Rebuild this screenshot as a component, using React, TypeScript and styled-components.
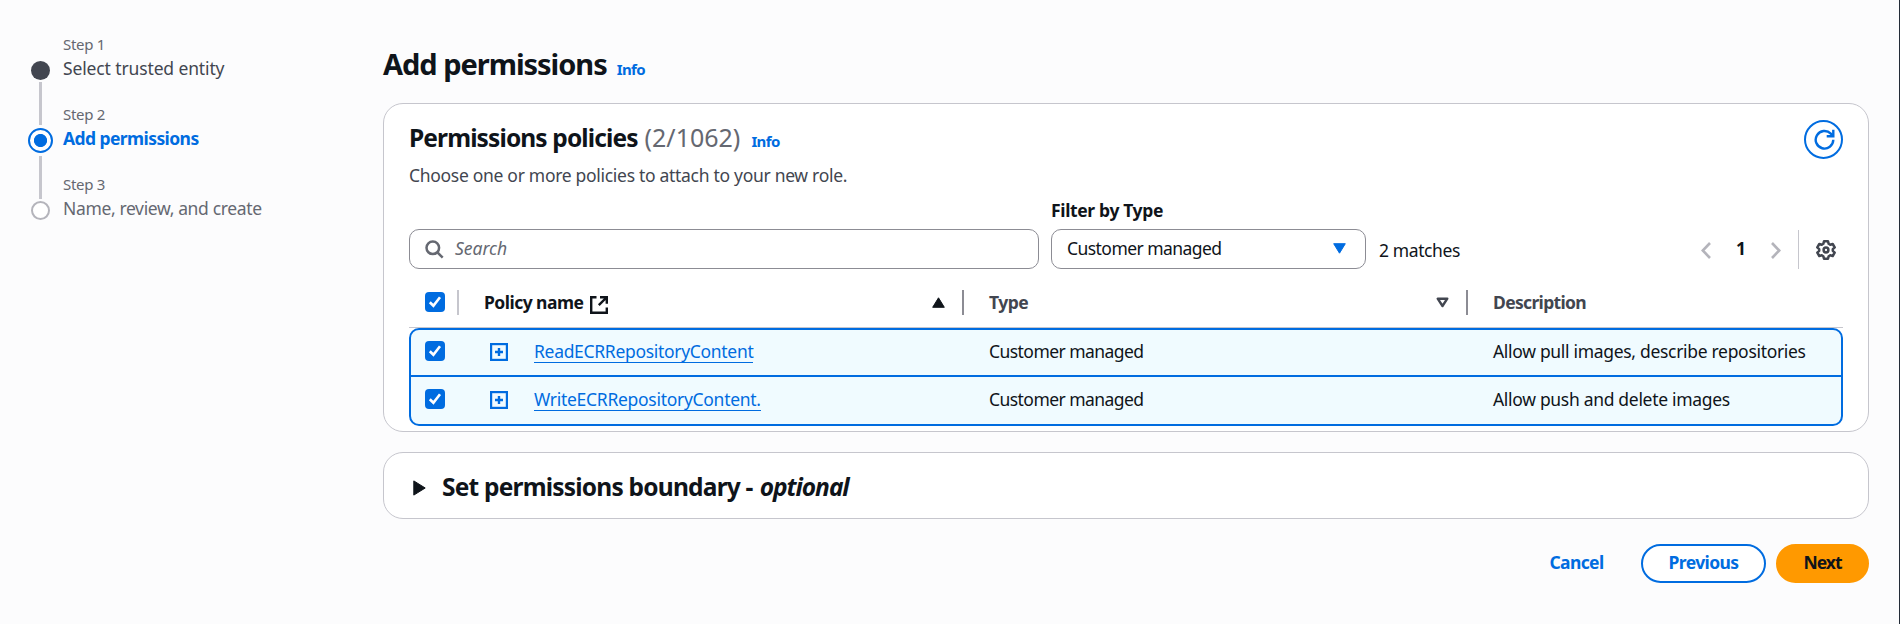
import React from 'react';
import styled, { createGlobalStyle, css } from 'styled-components';

const GlobalStyle = createGlobalStyle`
  *, *::before, *::after { box-sizing: border-box; }
  body {
    margin: 0;
    background: #fcfcfd;
    color: #0f141a;
    font-family: "Noto Sans", "Open Sans", sans-serif;
    font-size: 17.5px;
    line-height: 25px;
  }
  svg { display: block; flex: none; }
`;

const BLUE = '#006ce0';

type StepState = 'done' | 'active' | 'todo';

const Page = styled.div`
  display: flex;
  width: 1900px;
  height: 624px;
  overflow: hidden;
  border-right: 1px solid #232b37;
`;

/* ---- text ---- */
const Text = styled.span<{ $track?: number }>`
  letter-spacing: ${p => p.$track ?? 0}px;
  white-space: nowrap;
`;
const InfoLink = styled.a`
  color: ${BLUE};
  font-size: 15px;
  font-weight: 700;
  letter-spacing: -0.6px;
`;

/* ---- step navigation ---- */
const Steps = styled.ol`
  list-style: none;
  margin: 0;
  padding: 34px 0 0 28px;
  width: 383px;
  flex: none;
`;
const Step = styled.li`
  display: flex;
  gap: 10px;
  height: 70px;
`;
const Rail = styled.div`
  display: flex;
  flex-direction: column;
  align-items: center;
  width: 25px;
  padding-top: 24px;
`;
const Marker = styled.div<{ $state: StepState }>`
  display: flex;
  align-items: center;
  justify-content: center;
  width: 25px;
  height: 25px;
  flex: none;
  &::before {
    content: '';
    border-radius: 50%;
    width: 19px;
    height: 19px;
    ${p => p.$state === 'done' && css`background: #424650;`}
    ${p => p.$state === 'todo' && css`border: 2px solid #b4b4bb; background: #fff;`}
    ${p => p.$state === 'active' && css`
      width: 25px;
      height: 25px;
      border: 2px solid ${BLUE};
      background: radial-gradient(circle, ${BLUE} 6.2px, #fff 6.9px);
    `}
  }
`;
const Connector = styled.div<{ $gap: number }>`
  width: 3px;
  height: 43px;
  flex: none;
  margin-top: ${p => p.$gap}px;
  background: #c6c6cd;
`;
const StepBody = styled.div`
  display: flex;
  flex-direction: column;
  gap: 2px;
`;
const StepLabel = styled.span`
  font-size: 15px;
  line-height: 20px;
  letter-spacing: -0.3px;
  color: #656871;
`;
const StepName = styled.span<{ $state: StepState; $track: number }>`
  letter-spacing: ${p => p.$track}px;
  color: ${p => ({ done: '#424650', active: BLUE, todo: '#656871' })[p.$state]};
  font-weight: ${p => (p.$state === 'active' ? 700 : 400)};
  white-space: nowrap;
`;

/* ---- main column ---- */
const Main = styled.main`
  width: 1486px;
  padding-top: 45px;
  flex: none;
`;
const PageTitle = styled.h1`
  display: flex;
  align-items: baseline;
  gap: 10px;
  margin: 0;
  height: 58px;
  font-size: 29px;
  line-height: 37px;
`;
const Card = styled.section`
  border: 1px solid #c6c6cd;
  border-radius: 20px;
  background: #fff;
`;
const PolicyCard = styled(Card)`
  height: 329px;
  padding: 16px 25px 0;
`;
const CardHeader = styled.header`
  display: flex;
  justify-content: space-between;
  height: 78px;
`;
const CardTitle = styled.h2`
  display: flex;
  align-items: baseline;
  margin: 2px 0 7px;
  font-size: 24.5px;
  line-height: 30px;
`;
const Counter = styled.span`
  margin: 0 11px 0 7px;
  font-size: 25px;
  font-weight: 400;
  color: #656871;
`;
const CardNote = styled.p`
  margin: 0;
  color: #424650;
  letter-spacing: -0.3px;
`;
const RoundButton = styled.button`
  display: flex;
  align-items: center;
  justify-content: center;
  width: 39px;
  height: 39px;
  padding: 0 0 1px 1px;
  border: 2px solid ${BLUE};
  border-radius: 50%;
  background: #fff;
`;

const Toolbar = styled.div`
  display: flex;
  align-items: flex-end;
  height: 71px;
`;
const SearchBox = styled.div`
  display: flex;
  align-items: center;
  gap: 11px;
  width: 630px;
  height: 40px;
  margin-right: 12px;
  padding: 0 15px;
  border: 1px solid #8c8c94;
  border-radius: 10px;
  color: #656871;
  font-style: italic;
`;
const SearchHint = styled.span`
  padding-bottom: 2px;
`;
const Filter = styled.div`
  display: flex;
  flex-direction: column;
  gap: 6px;
  width: 315px;
`;
const FilterLabel = styled.label`
  font-weight: 700;
  letter-spacing: -0.35px;
`;
const Select = styled.div`
  display: flex;
  align-items: center;
  justify-content: space-between;
  height: 40px;
  padding: 0 19px 1px 15px;
  border: 1px solid #8c8c94;
  border-radius: 10px;
`;
const Matches = styled.div`
  margin: 0 auto 6px 13px;
  letter-spacing: -0.39px;
`;
const Pager = styled.div`
  display: flex;
  align-items: center;
  height: 40px;
  margin-bottom: -1px;
  padding-right: 7px;
`;
const PageNumber = styled.b`
  width: 60px;
  text-align: center;
  padding-bottom: 3px;
`;
const PagerDivider = styled.div`
  align-self: flex-start;
  width: 1px;
  height: 39px;
  margin: 0 17px;
  background: #c6c6cd;
`;

/* ---- table ---- */
const HeadRow = styled.div`
  display: grid;
  grid-template-columns: 50px 505px 504px 1fr;
  height: 59px;
  padding-top: 8px;
  align-items: center;
  font-weight: 700;
  border-bottom: 1px solid #c6c6cd;
`;
const HeadCell = styled.div<{ $pad: number; $muted?: boolean; $divider?: string }>`
  display: flex;
  align-items: center;
  height: 25px;
  padding: 0 17px 0 ${p => p.$pad}px;
  color: ${p => (p.$muted ? '#424650' : '#0f141a')};
  border-right: ${p => (p.$divider ? `2px solid ${p.$divider}` : 'none')};
`;
const CheckHead = styled(HeadCell)`
  padding-right: 0;
`;
const HeadLabel = styled.span`
  display: flex;
  align-items: flex-start;
  gap: 7px;
  flex: 1;
`;
const ExternalMark = styled.span`
  padding-top: 6px;
`;

const Rows = styled.div`
  border: 2px solid ${BLUE};
  border-radius: 10px;
  overflow: hidden;
  background: #f0fbff;
`;
const BodyRow = styled.div`
  display: grid;
  grid-template-columns: 48px 505px 504px 1fr;
  height: 45px;
  padding-top: 9px;
  & + & {
    height: 49px;
    padding-top: 10px;
    border-top: 2px solid ${BLUE};
  }
`;
const Cell = styled.div<{ $pad: number }>`
  display: flex;
  align-items: flex-start;
  padding-left: ${p => p.$pad}px;
`;
const CheckCell = styled(Cell)`
  padding-top: 2px;
`;
const ExpandIcon = styled.span`
  padding-top: 4px;
`;
const PolicyLink = styled.a<{ $track: number }>`
  margin-left: 26px;
  height: 24px;
  color: ${BLUE};
  letter-spacing: ${p => p.$track}px;
  border-bottom: 1px solid ${BLUE};
`;
const CheckBoxFrame = styled.span`
  display: flex;
  width: 20px;
  height: 20px;
  border-radius: 4px;
  background: ${BLUE};
`;

/* ---- footer ---- */
const BoundaryCard = styled(Card)`
  display: flex;
  align-items: center;
  height: 67px;
  margin-top: 20px;
  padding: 5px 0 0 29px;
  font-size: 24.5px;
  font-weight: 700;
  line-height: 30px;
`;
const BoundaryTitle = styled.div`
  display: flex;
  gap: 7px;
  margin-left: 16px;
  padding-bottom: 3px;
`;
const Actions = styled.footer`
  display: flex;
  justify-content: flex-end;
  gap: 10px;
  margin-top: 25px;
`;
const Button = styled.button<{ $kind: 'link' | 'normal' | 'primary'; $track: number }>`
  height: 39px;
  width: ${p => ({ link: 109, normal: 125, primary: 93 })[p.$kind]}px;
  padding: 0 0 2px;
  border: 2px solid ${p => ({ link: 'transparent', normal: BLUE, primary: '#ff9900' })[p.$kind]};
  border-radius: 20px;
  background: ${p => ({ link: 'transparent', normal: '#fff', primary: '#ff9900' })[p.$kind]};
  color: ${p => (p.$kind === 'primary' ? '#0f141a' : BLUE)};
  font: inherit;
  font-weight: 700;
  line-height: 25px;
  letter-spacing: ${p => p.$track}px;
`;

/* ---- icons ---- */
const CheckBox = () => (
  <CheckBoxFrame>
    <svg width="20" height="20" viewBox="0 0 20 20" fill="none" stroke="#fff" strokeWidth="2.6">
      <path d="M4.8 10.2 8.4 13.7 15 5.2" />
    </svg>
  </CheckBoxFrame>
);
const PlusBox = () => (
  <svg width="18" height="18" viewBox="0 0 18 18" fill="none" stroke={BLUE}>
    <rect x="1.1" y="1.1" width="15.8" height="15.8" strokeWidth="2.2" />
    <path d="M9 5v8M5 9h8" strokeWidth="2.4" />
  </svg>
);
const ExternalIcon = () => (
  <svg width="18" height="18" viewBox="0 0 18 18" fill="none" stroke="#0f141a" strokeWidth="2.4">
    <path d="M6.5 1.2H1.2v15.6h15.6v-5.3M10 1.2h6.8v6.5M16.5 1.5 8.8 9.2" />
  </svg>
);
const SearchIcon = () => (
  <svg width="19" height="19" viewBox="0 0 19 19" fill="none" stroke="#656871" strokeWidth="2.5">
    <circle cx="7.8" cy="7.8" r="6.3" />
    <path d="m12.2 12.2 5.5 5.5" />
  </svg>
);
const RefreshIcon = () => (
  <svg width="21" height="21" viewBox="0 0 21 21" fill="none" stroke={BLUE} strokeWidth="2.4">
    <path d="M19.3 10.8A8.8 8.8 0 1 1 16.8 4.6l1.9 2" />
    <path d="M19.3.8v6.4h-6.6" />
  </svg>
);
const Chevron = ({ right }: { right?: boolean }) => (
  <svg width="10" height="17" viewBox="0 0 10 17" fill="none" stroke="#b4b4bb" strokeWidth="2.6">
    <path d={right ? 'm1 1 7.2 7.5L1 16' : 'M9 1 1.8 8.5 9 16'} />
  </svg>
);
const GearIcon = () => (
  <svg width="20" height="20" viewBox="0 0 20 20" fill="none" stroke="#424650" strokeWidth="2.5" strokeLinejoin="round">
    <path d="M8 1.3h4l.7 2.5 1.5.9 2.5-.7 2 3.4-1.9 1.8v1.6l1.9 1.8-2 3.4-2.5-.7-1.5.9-.7 2.5H8l-.7-2.5-1.5-.9-2.5.7-2-3.4 1.9-1.8V9.2L1.3 7.4l2-3.4 2.5.7 1.5-.9z" />
    <circle cx="10" cy="10" r="2.4" />
  </svg>
);
const SortAsc = () => (
  <svg width="13" height="11" viewBox="0 0 13 11" fill="#0f141a" stroke="#0f141a" strokeLinejoin="round">
    <path d="M6.5.8 12.3 10.3H.7z" />
  </svg>
);
const SortNone = () => (
  <svg width="13" height="11" viewBox="0 0 13 11" fill="none" stroke="#424650" strokeWidth="2.4" strokeLinejoin="round">
    <path d="M1.7 1.7h9.6L6.5 9z" />
  </svg>
);
const SelectCaret = () => (
  <svg width="13" height="11" viewBox="0 0 13 11" fill={BLUE} stroke={BLUE} strokeLinejoin="round">
    <path d="M.7.7h11.6L6.5 10.2z" />
  </svg>
);
const ExpandCaret = () => (
  <svg width="13" height="16" viewBox="0 0 13 16" fill="#0f141a" stroke="#0f141a" strokeLinejoin="round">
    <path d="M.8.9v14.2L12.2 8z" />
  </svg>
);

const steps: { name: string; state: StepState; track: number; gap?: number }[] = [
  { name: 'Select trusted entity', state: 'done', track: -0.13, gap: -1 },
  { name: 'Add permissions', state: 'active', track: -0.58, gap: 3 },
  { name: 'Name, review, and create', state: 'todo', track: -0.36 },
];
const policies = [
  { name: 'ReadECRRepositoryContent', track: -0.31, description: 'Allow pull images, describe repositories' },
  { name: 'WriteECRRepositoryContent.', track: -0.29, description: 'Allow push and delete images' },
];

export default function App() {
  return (
    <Page>
      <GlobalStyle />
      <Steps>
        {steps.map((step, i) => (
          <Step key={step.name}>
            <Rail>
              <Marker $state={step.state} />
              {step.gap !== undefined && <Connector $gap={step.gap} />}
            </Rail>
            <StepBody>
              <StepLabel>Step {i + 1}</StepLabel>
              <StepName $state={step.state} $track={step.track}>{step.name}</StepName>
            </StepBody>
          </Step>
        ))}
      </Steps>
      <Main>
        <PageTitle>
          <Text $track={-1.03}>Add permissions</Text>
          <InfoLink>Info</InfoLink>
        </PageTitle>
        <PolicyCard>
          <CardHeader>
            <div>
              <CardTitle>
                <Text $track={-0.88}>Permissions policies</Text>
                <Counter>(2/1062)</Counter>
                <InfoLink>Info</InfoLink>
              </CardTitle>
              <CardNote>Choose one or more policies to attach to your new role.</CardNote>
            </div>
            <RoundButton aria-label="Refresh"><RefreshIcon /></RoundButton>
          </CardHeader>
          <Toolbar>
            <SearchBox><SearchIcon /><SearchHint>Search</SearchHint></SearchBox>
            <Filter>
              <FilterLabel>Filter by Type</FilterLabel>
              <Select>
                <Text $track={-0.55}>Customer managed</Text>
                <SelectCaret />
              </Select>
            </Filter>
            <Matches>2 matches</Matches>
            <Pager>
              <Chevron />
              <PageNumber>1</PageNumber>
              <Chevron right />
              <PagerDivider />
              <GearIcon />
            </Pager>
          </Toolbar>
          <HeadRow>
            <CheckHead $pad={16} $divider="#c6c6cd"><CheckBox /></CheckHead>
            <HeadCell $pad={25} $divider="#8c8c94">
              <HeadLabel>
                <Text $track={-0.53}>Policy name</Text>
                <ExternalMark><ExternalIcon /></ExternalMark>
              </HeadLabel>
              <SortAsc />
            </HeadCell>
            <HeadCell $pad={25} $muted $divider="#8c8c94">
              <HeadLabel><Text $track={-0.5}>Type</Text></HeadLabel>
              <SortNone />
            </HeadCell>
            <HeadCell $pad={25} $muted>
              <Text $track={-0.66}>Description</Text>
            </HeadCell>
          </HeadRow>
          <Rows>
            {policies.map(policy => (
              <BodyRow key={policy.name}>
                <CheckCell $pad={14}><CheckBox /></CheckCell>
                <Cell $pad={31}>
                  <ExpandIcon><PlusBox /></ExpandIcon>
                  <PolicyLink $track={policy.track}>{policy.name}</PolicyLink>
                </Cell>
                <Cell $pad={25}><Text $track={-0.55}>Customer managed</Text></Cell>
                <Cell $pad={25}><Text $track={-0.31}>{policy.description}</Text></Cell>
              </BodyRow>
            ))}
          </Rows>
        </PolicyCard>
        <BoundaryCard>
          <ExpandCaret />
          <BoundaryTitle>
            <Text $track={-0.79}>Set permissions boundary -</Text>
            <Text as="em" $track={-1.03}>optional</Text>
          </BoundaryTitle>
        </BoundaryCard>
        <Actions>
          <Button $kind="link" $track={-0.63}>Cancel</Button>
          <Button $kind="normal" $track={-0.6}>Previous</Button>
          <Button $kind="primary" $track={-1}>Next</Button>
        </Actions>
      </Main>
    </Page>
  );
}
